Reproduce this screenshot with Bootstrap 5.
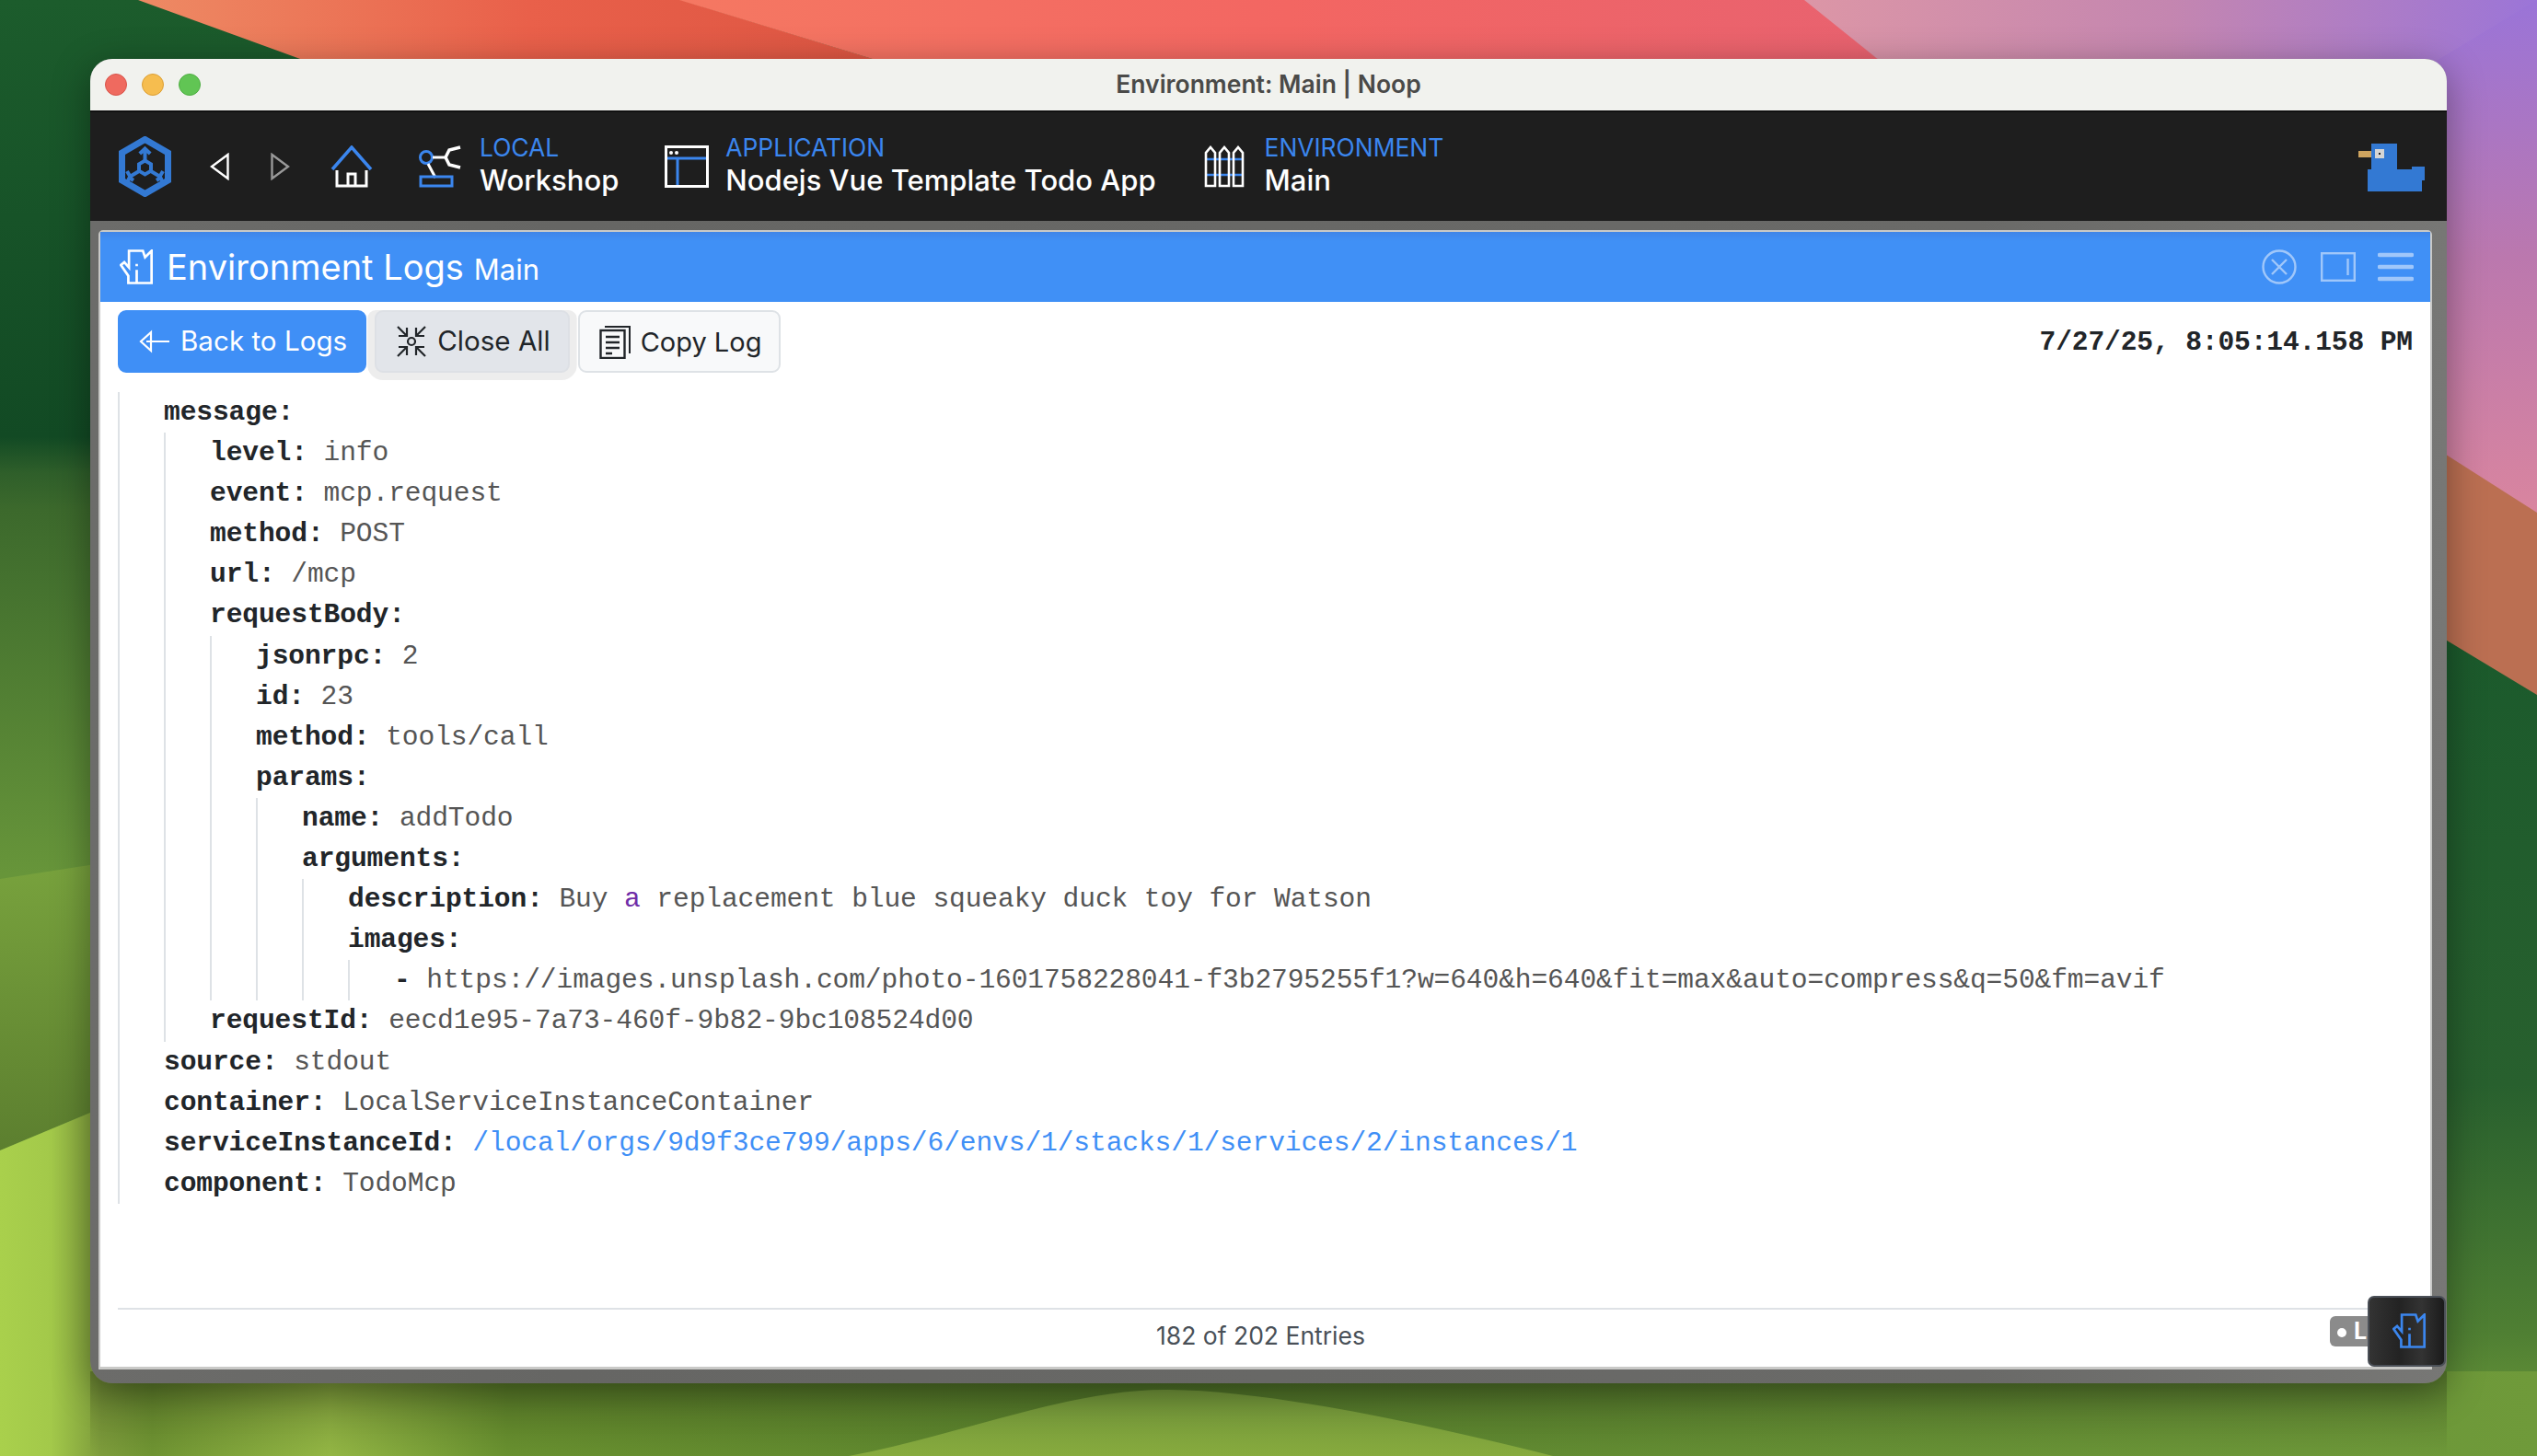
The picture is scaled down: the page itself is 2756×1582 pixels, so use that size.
<!DOCTYPE html>
<html lang="en">
<head>
<meta charset="utf-8">
<title>Environment: Main | Noop</title>
<link href="https://cdn.jsdelivr.net/npm/bootstrap@5.3.0/dist/css/bootstrap.min.css" rel="stylesheet">
<style>
html,body{margin:0;height:100%;background:#1b5a2b;overflow:hidden}
body{font-family:Inter,"Liberation Sans",sans-serif;position:relative}
.wall{position:absolute;left:0;top:0;width:2756px;height:1582px}
.desk{position:relative;padding:64px 98px 0}
.win{position:relative;width:2560px;height:1439px;border-radius:24px;background:linear-gradient(90deg,#6c6c6a,#666664 20%,#6a6a68 80%,#777775);box-shadow:0 10px 40px rgba(0,0,0,.38);overflow:hidden}
.tbar{height:58px;background:#f1f2ee;border-bottom:2px solid #111;position:relative;color:#4a4a48;font-size:26.500px;font-weight:600;line-height:55px;text-align:center}
.dots{position:absolute;left:16px;top:16px;gap:16px}
.dot{width:24px;height:24px;border-radius:50%;display:block}
.d-r{background:#ef6a5f;border:1px solid #d8544a}
.d-y{background:#f6bd4f;border:1px solid #dc9f35}
.d-g{background:#61c554;border:1px solid #4fae43}
.topnav{height:118px;background:#1e1e1e;padding:0 24px 0 31px;color:#fff}
.crumb{line-height:1;margin-top:-5px}
.cr-a{margin-left:19px;margin-right:50px}
.cr-b{margin-left:18px;margin-right:52px}
.cr-c{margin-left:22px}
.crumb-l{font-size:26.400px;color:#3b86ee;line-height:34px}
.crumb-v{font-size:31px;font-weight:500;line-height:38px;white-space:nowrap}
.panel{position:absolute;left:9px;top:186px;width:2535px;height:1238px;background:#fff;border:2px solid #c9c9c7;border-bottom-width:3px;border-radius:5px 5px 0 0}
.phead{height:76px;background:linear-gradient(#3f85e8,#4090f6 10px);color:#fff;padding-left:21px;padding-right:18px}
.ph-t{font-size:38px;line-height:1;margin-left:15px}
.ph-s{font-size:31px;margin-left:11px}
.ph-i{opacity:.5}
.tools{padding:9px 19px 0;height:98px;align-items:flex-start}
.tbtn{height:68px;font-size:29.600px;padding:0 19px 0 21px;border-radius:9px;gap:11px;line-height:1;white-space:nowrap;border-width:2px}
.tbtn.b-back{background:#3f8ff6;border-color:#3f8ff6;color:#fff}
.tbtn.b-close{background:#e2e5ea;border-color:#dde0e5;color:#212529;box-shadow:0 0 0 8px #ededed;clip-path:inset(0 -8px -8px -8px round 9px)}
.tbtn.b-copy{background:#f8f9fa;border-color:#dee2e6;color:#212529;font-size:29px}
.stamp{font-family:"Liberation Mono",monospace;font-weight:700;font-size:29.600px;color:#212529;line-height:70px;letter-spacing:-.13px}
.tree{font-family:"Liberation Mono",monospace;font-size:29.600px;line-height:44.100px;letter-spacing:-.11px;color:#555;margin-left:19px;white-space:pre;height:1000px}
.lv{border-left:2px solid #dee2e6;padding-left:48px}
.kk{font-weight:700;color:#212529}
.pur{color:#6f2da8}
.lnk{color:#3f8ff6;text-decoration:none}
.foot{position:absolute;left:19px;right:19px;bottom:0;height:64px;border-top:2px solid #dee2e6;font-size:26.500px;color:#495057;line-height:56px;padding-right:10px}
.lbadge{position:absolute;right:26px;top:7px;width:64px;height:33px;background:#8b8b8b;color:#fff;border-radius:6px;font-size:25px;font-weight:700;line-height:33px;padding:0 0 0 8px;overflow:hidden;text-align:left}
.lbadge i{display:inline-block;width:10px;height:10px;background:#fff;border-radius:50%;margin-right:8px;vertical-align:2px}
.logbtn{position:absolute;left:2474px;top:1344px;width:85px;height:77px;border-radius:7px;border:2px solid #4b5058;background:linear-gradient(90deg,#333,#232323 40%,#333 70%,#1b1b1b)}
</style>
</head>
<body>
<svg class="wall" viewBox="0 0 2756 1582" preserveAspectRatio="none" aria-hidden="true">
<defs>
<linearGradient id="g1" x1="0" y1="0" x2="0" y2="1"><stop offset="0" stop-color="#1c5c2c"/><stop offset=".3" stop-color="#124a24"/><stop offset=".325" stop-color="#2f5f2a"/><stop offset=".35" stop-color="#3c692c"/><stop offset=".6" stop-color="#67953a"/><stop offset="1" stop-color="#60913a"/></linearGradient>
<linearGradient id="g2" x1="0" y1="0" x2="1" y2="0"><stop offset="0" stop-color="#ee8a64"/><stop offset=".5" stop-color="#e9604a"/><stop offset="1" stop-color="#dc5542"/></linearGradient>
<linearGradient id="g3" x1="0" y1="0" x2="1" y2="0"><stop offset="0" stop-color="#f57862"/><stop offset=".5" stop-color="#f36662"/><stop offset="1" stop-color="#e86270"/></linearGradient>
<linearGradient id="g4" gradientUnits="userSpaceOnUse" x1="1960" y1="0" x2="2756" y2="0"><stop offset="0" stop-color="#dc96a6"/><stop offset=".5" stop-color="#c486b0"/><stop offset="1" stop-color="#9b75d8"/></linearGradient>
<linearGradient id="g4b" x1="0" y1="0" x2="0" y2="1"><stop offset="0" stop-color="#9a74d8"/><stop offset=".5" stop-color="#bb78ae"/><stop offset="1" stop-color="#d9859f"/></linearGradient>
<linearGradient id="g5" x1="0" y1="0" x2="0" y2="1"><stop offset="0" stop-color="#1b5a2c"/><stop offset=".55" stop-color="#28602e"/><stop offset=".85" stop-color="#4f7f33"/><stop offset="1" stop-color="#719c3a"/></linearGradient>
<linearGradient id="g6" x1="0" y1="0" x2="0" y2="1"><stop offset="0" stop-color="#78a23d"/><stop offset="1" stop-color="#5c7f2f"/></linearGradient>
<linearGradient id="g8" gradientUnits="userSpaceOnUse" x1="0" y1="0" x2="2756" y2="0"><stop offset="0" stop-color="#a9d04c"/><stop offset=".02" stop-color="#a3c94a"/><stop offset=".04" stop-color="#7d9c3b"/><stop offset=".06" stop-color="#6f9432"/><stop offset=".13" stop-color="#93b644"/><stop offset=".2" stop-color="#68902f"/><stop offset=".45" stop-color="#5c852e"/><stop offset="1" stop-color="#6f9a3a"/></linearGradient>
<linearGradient id="g8s" x1="0" y1="0" x2="0" y2="1"><stop offset="0" stop-color="#000" stop-opacity=".22"/><stop offset="1" stop-color="#000" stop-opacity="0"/></linearGradient>
<linearGradient id="g9" x1="0" y1="0" x2="0" y2="1"><stop offset="0" stop-color="#6f9239"/><stop offset="1" stop-color="#87ab3e"/></linearGradient>
</defs>
<rect width="2756" height="1582" fill="url(#g1)"/>
<rect x="2640" y="0" width="116" height="560" fill="url(#g4b)"/>
<polygon points="150,0 740,0 1000,80 370,80" fill="url(#g2)"/>
<polygon points="738,0 1962,0 2060,80 1000,80" fill="url(#g3)"/>
<polygon points="1960,0 2756,0 2640,70 2047,70" fill="url(#g4)"/>
<polygon points="2640,483 2756,557 2756,760 2640,690" fill="#bb6f52"/>
<polygon points="2640,685 2756,755 2756,1582 2640,1582" fill="url(#g5)"/>
<polygon points="0,955 110,938 110,1204 0,1250" fill="url(#g6)"/>
<polygon points="0,1250 110,1204 110,1582 0,1582" fill="url(#g8)"/>
<rect x="0" y="1490" width="2756" height="92" fill="url(#g8)"/>
<rect x="98" y="1490" width="2560" height="92" fill="url(#g8s)"/>
<path d="M922 1582C1040 1560 1160 1510 1265 1510C1380 1510 1560 1550 1687 1582Z" fill="url(#g9)"/>
</svg>
<div class="desk">
<div class="win d-flex flex-column">
  <div class="tbar">Environment: Main | Noop
    <div class="dots d-flex"><span class="dot d-r"></span><span class="dot d-y"></span><span class="dot d-g"></span></div>
  </div>
  <nav class="topnav d-flex align-items-center">
    <svg width="57" height="66" viewBox="0 0 57 66"><path d="M28.500 3.500 53.500 18V48L28.500 62.500 3.500 48V18Z" fill="none" stroke="#3379d3" stroke-width="7"/><path d="M28.500 26.500 35 30.300V37.700L28.500 41.500 22 37.700V30.300Z" fill="none" stroke="#3379d3" stroke-width="4"/><path d="M28.500 26V15M22.800 19 28.500 13.500 34.200 19M22 38 12 44M9 38 12.500 44 9 50M35 38 45 44M48 38 44.500 44 48 50M10 44 16 48M47 44 41 48" fill="none" stroke="#3379d3" stroke-width="4"/></svg>
    <svg style="margin-left:42px" width="21" height="30" viewBox="0 0 21 30"><path d="M19.500 2V28L2 15Z" fill="none" stroke="#fff" stroke-width="2.400"/></svg>
    <svg style="margin-left:45px" width="21" height="30" viewBox="0 0 21 30"><path d="M1.500 2V28L19 15Z" fill="none" stroke="#999" stroke-width="2.400"/></svg>
    <svg style="margin-left:44px" width="46" height="46" viewBox="0 0 46 46"><path d="M2 26 23 2 44 26" fill="none" stroke="#3b86ee" stroke-width="3.500"/><path d="M7 27V44H39V27M19 44V31H27V44" fill="none" stroke="#fff" stroke-width="3"/></svg>
    <svg style="margin-left:50px" width="47" height="46" viewBox="0 0 47 46"><circle cx="8" cy="13" r="6.500" fill="none" stroke="#3b86ee" stroke-width="3"/><path d="M15 13H29M10 20 18 35" stroke="#fff" stroke-width="3" fill="none"/><path d="M29 13 33 5 45 2M29 13 33 21 45 24" stroke="#fff" stroke-width="3.500" fill="none"/><rect x="2" y="34" width="34" height="10" fill="none" stroke="#3b86ee" stroke-width="3"/></svg>
    <div class="crumb cr-a"><div class="crumb-l">LOCAL</div><div class="crumb-v">Workshop</div></div>
    <svg width="48" height="46" viewBox="0 0 48 46"><rect x="1.500" y="1.500" width="45" height="43" fill="none" stroke="#fff" stroke-width="3"/><path d="M3 14H45M14 14V43" stroke="#3b86ee" stroke-width="3" fill="none"/><circle cx="7" cy="8" r="2" fill="#fff"/><circle cx="13" cy="8" r="2" fill="#fff"/></svg>
    <div class="crumb cr-b"><div class="crumb-l">APPLICATION</div><div class="crumb-v">Nodejs Vue Template Todo App</div></div>
    <svg width="44" height="46" viewBox="0 0 44 46"><path d="M12 15H17M27 15H32M12 32H17M27 32H32M3 15H41M3 32H41" stroke="#3b86ee" stroke-width="2.600" fill="none"/><path d="M2 44V8L7 2 12 8V44ZM17 44V8L22 2 27 8V44ZM32 44V8L37 2 42 8V44Z" fill="none" stroke="#fff" stroke-width="2.600"/></svg>
    <div class="crumb cr-c"><div class="crumb-l">ENVIRONMENT</div><div class="crumb-v">Main</div></div>
    <svg class="ms-auto" width="73" height="53" viewBox="0 0 73 53"><rect x="1" y="9" width="14" height="7" fill="#cfa45f"/><rect x="15" y="1" width="28" height="28" fill="#3379d3"/><rect x="19" y="7" width="10" height="10" fill="#d5d5d5"/><rect x="23" y="11" width="2" height="2" fill="#222"/><rect x="11" y="29" width="59" height="24" fill="#3379d3"/><rect x="59" y="26" width="14" height="15" fill="#3379d3"/></svg>
  </nav>
  <div class="panel d-flex flex-column">
    <header class="phead d-flex align-items-center">
      <svg width="36" height="38" viewBox="0 0 107 112"><path d="M30 4H75L82 25 103 4V108H28V85L4 50 15 41 30 58Z" fill="none" stroke="#fff" stroke-width="8"/><path d="M55 66V108M55 46V54" stroke="#fff" stroke-width="8" fill="none"/></svg>
      <div class="ph-t">Environment Logs<span class="ph-s">Main</span></div>
      <div class="ms-auto d-flex align-items-center ph-i">
        <svg width="38" height="38" viewBox="0 0 38 38"><circle cx="19" cy="19" r="17.500" fill="none" stroke="#fff" stroke-width="2.400"/><path d="M11 11 27 27M27 11 11 27" stroke="#fff" stroke-width="2.400"/></svg>
        <svg style="margin-left:26px" width="38" height="32" viewBox="0 0 38 32"><rect x="1.200" y="1.200" width="35.600" height="29.600" fill="none" stroke="#fff" stroke-width="2.400"/><path d="M29.500 7V25" stroke="#fff" stroke-width="2.400"/></svg>
        <svg style="margin-left:24px" width="39" height="32" viewBox="0 0 39 32"><path d="M2 3H37M2 16H37M2 29H37" stroke="#fff" stroke-width="4.500" stroke-linecap="round"/></svg>
      </div>
    </header>
    <div class="tools d-flex">
      <button class="btn tbtn b-back d-flex align-items-center"><svg width="34" height="26" viewBox="0 0 34 26"><path d="M33 13H8M13 3 2 13 13 23Z" fill="none" stroke="#fff" stroke-width="2.200"/></svg>Back to Logs</button>
      <button class="btn tbtn b-close d-flex align-items-center" style="margin-left:9px"><svg width="34" height="36" viewBox="0 0 34 36"><circle cx="17" cy="18" r="4" fill="none" stroke="#212529" stroke-width="2.200"/><path d="M2 2 12 12M12 3V12H3M32 2 22 12M22 3V12H31M2 34 12 24M12 33V24H3M32 34 22 24M22 33V24H31" fill="none" stroke="#212529" stroke-width="2.200"/></svg>Close All</button>
      <button class="btn tbtn b-copy d-flex align-items-center" style="margin-left:9px"><svg width="34" height="37" viewBox="0 0 34 37"><path d="M6 2H33V31" fill="none" stroke="#212529" stroke-width="2"/><rect x="1.500" y="6" width="26" height="30" fill="none" stroke="#212529" stroke-width="2.400"/><path d="M7 13H22M7 19H22M7 25H22M7 31H14" stroke="#212529" stroke-width="2.400"/></svg>Copy Log</button>
      <div class="stamp ms-auto">7/27/25, 8:05:14.158 PM</div>
    </div>
    <div class="tree"><div class="lv"><div class="kk">message:</div><div class="lv"><div><span class="kk">level:</span> info</div><div><span class="kk">event:</span> mcp.request</div><div><span class="kk">method:</span> POST</div><div><span class="kk">url:</span> /mcp</div><div class="kk">requestBody:</div><div class="lv"><div><span class="kk">jsonrpc:</span> 2</div><div><span class="kk">id:</span> 23</div><div><span class="kk">method:</span> tools/call</div><div class="kk">params:</div><div class="lv"><div><span class="kk">name:</span> addTodo</div><div class="kk">arguments:</div><div class="lv"><div><span class="kk">description:</span> Buy <span class="pur">a</span> replacement blue squeaky duck toy for Watson</div><div class="kk">images:</div><div class="lv"><div><span class="kk">-</span> https://images.unsplash.com/photo-1601758228041-f3b2795255f1?w=640&amp;h=640&amp;fit=max&amp;auto=compress&amp;q=50&amp;fm=avif</div></div></div></div></div><div><span class="kk">requestId:</span> eecd1e95-7a73-460f-9b82-9bc108524d00</div></div><div><span class="kk">source:</span> stdout</div><div><span class="kk">container:</span> LocalServiceInstanceContainer</div><div><span class="kk">serviceInstanceId:</span> <a class="lnk" href="#">/local/orgs/9d9f3ce799/apps/6/envs/1/stacks/1/services/2/instances/1</a></div><div><span class="kk">component:</span> TodoMcp</div></div></div>
    <div class="foot text-center">182 of 202 Entries<span class="lbadge"><i></i>L</span></div>
  </div>
  <div class="logbtn d-flex align-items-center justify-content-center"><svg style="margin-left:5px;margin-top:-1px" width="36" height="38" viewBox="0 0 107 112"><path d="M30 4H75L82 25 103 4V108H28V85L4 50 15 41 30 58Z" fill="none" stroke="#3b86ee" stroke-width="8"/><path d="M55 66V108M55 46V54" stroke="#3b86ee" stroke-width="8" fill="none"/></svg></div>
</div>
</div>
<script src="https://cdn.jsdelivr.net/npm/bootstrap@5.3.0/dist/js/bootstrap.bundle.min.js"></script>
</body>
</html>
